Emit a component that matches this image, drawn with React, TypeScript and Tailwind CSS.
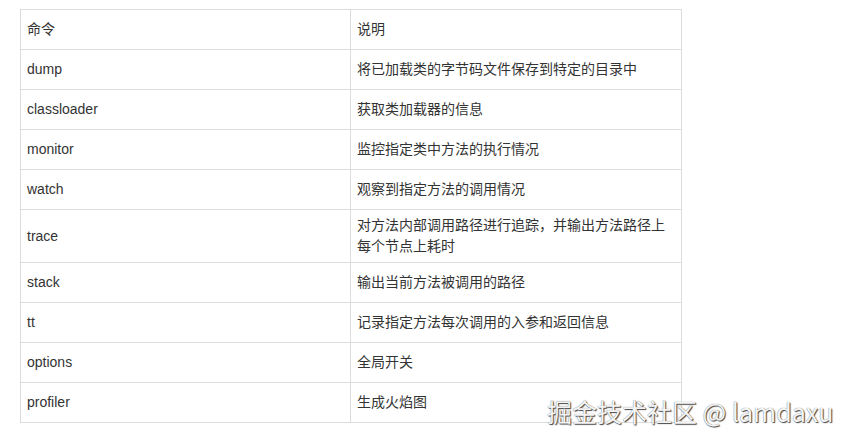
import React from "react";

const rows: [string, string][] = [
  ["dump", "将已加载类的字节码文件保存到特定的目录中"],
  ["classloader", "获取类加载器的信息"],
  ["monitor", "监控指定类中方法的执行情况"],
  ["watch", "观察到指定方法的调用情况"],
  ["trace", "对方法内部调用路径进行追踪，并输出方法路径上每个节点上耗时"],
  ["stack", "输出当前方法被调用的路径"],
  ["tt", "记录指定方法每次调用的入参和返回信息"],
  ["options", "全局开关"],
  ["profiler", "生成火焰图"],
];

export default function App() {
  return (
    <div
      className="relative w-[853px] h-[445px] bg-white overflow-hidden pt-[9px] pl-[20px] text-[14px] text-[#333]"
      style={{ fontFamily: '"Liberation Sans", "Noto Sans CJK SC", sans-serif' }}
    >
      <div className="w-[662px] border-t border-l border-r border-[#dcdcdc]">
        <div className="grid grid-cols-[330px_331px] border-b border-[#dcdcdc]">
          <div className="h-[39px] flex items-center pl-[6px] border-r border-[#dcdcdc]">命令</div>
          <div className="h-[39px] flex items-center pl-[6px]">说明</div>
        </div>
        {rows.map(([c, d]) => (
          <div key={c} className="grid grid-cols-[330px_331px] border-b border-[#dcdcdc]">
            <div className="min-h-[39px] flex items-center pl-[6px] border-r border-[#dcdcdc]">{c}</div>
            <div className="min-h-[39px] flex items-center pl-[6px] pr-[10px] py-[5px] leading-[21px]">{d}</div>
          </div>
        ))}
      </div>
      <div
        className="absolute left-[547px] top-[394px] text-[25px] leading-[34px] text-[#f4f4f4] whitespace-nowrap [text-shadow:1px_1px_1px_#444,0_0_1px_#666]"
        style={{ fontFamily: '"Noto Sans CJK SC", sans-serif' }}
      >
        掘金技术社区 @ lamdaxu
      </div>
    </div>
  );
}
